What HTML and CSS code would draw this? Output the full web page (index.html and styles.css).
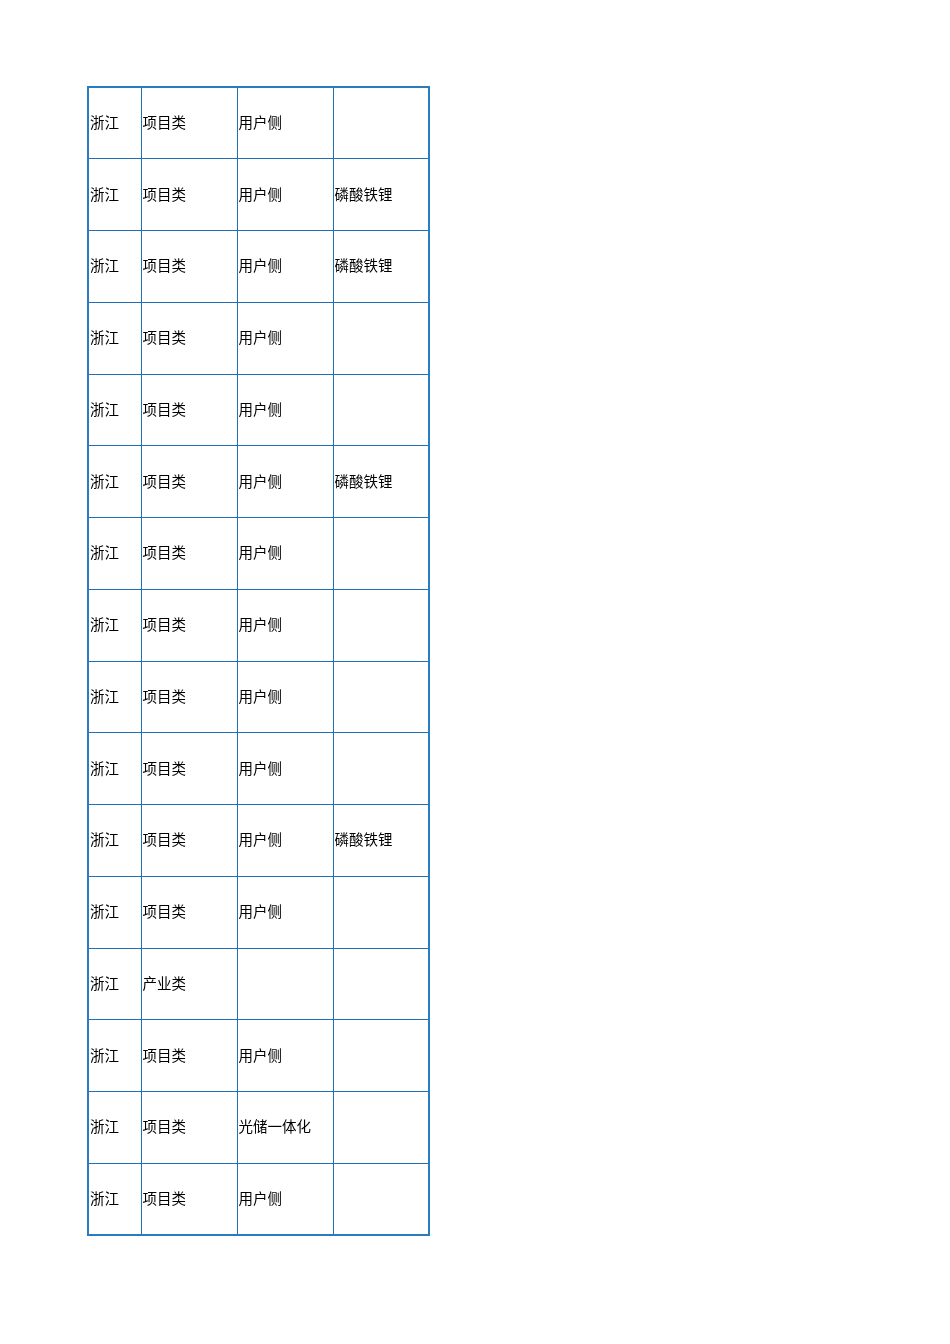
FILE: index.html
```html
<!DOCTYPE html>
<html lang="zh-CN">
<head>
<meta charset="utf-8">
<link rel="stylesheet" href="styles.css">
</head>
<body>
<table class="sheet">
<colgroup><col class="c1"><col class="c2"><col class="c3"><col class="c4"></colgroup>
<tbody>
<tr><td>浙江</td><td>项目类</td><td>用户侧</td><td></td></tr>
<tr><td>浙江</td><td>项目类</td><td>用户侧</td><td>磷酸铁锂</td></tr>
<tr><td>浙江</td><td>项目类</td><td>用户侧</td><td>磷酸铁锂</td></tr>
<tr><td>浙江</td><td>项目类</td><td>用户侧</td><td></td></tr>
<tr><td>浙江</td><td>项目类</td><td>用户侧</td><td></td></tr>
<tr><td>浙江</td><td>项目类</td><td>用户侧</td><td>磷酸铁锂</td></tr>
<tr><td>浙江</td><td>项目类</td><td>用户侧</td><td></td></tr>
<tr><td>浙江</td><td>项目类</td><td>用户侧</td><td></td></tr>
<tr><td>浙江</td><td>项目类</td><td>用户侧</td><td></td></tr>
<tr><td>浙江</td><td>项目类</td><td>用户侧</td><td></td></tr>
<tr><td>浙江</td><td>项目类</td><td>用户侧</td><td>磷酸铁锂</td></tr>
<tr><td>浙江</td><td>项目类</td><td>用户侧</td><td></td></tr>
<tr><td>浙江</td><td>产业类</td><td></td><td></td></tr>
<tr><td>浙江</td><td>项目类</td><td>用户侧</td><td></td></tr>
<tr><td>浙江</td><td>项目类</td><td>光储一体化</td><td></td></tr>
<tr><td>浙江</td><td>项目类</td><td>用户侧</td><td></td></tr>
</tbody>
</table>
</body>
</html>
```
FILE: styles.css
```css
html, body {
  margin: 0;
  padding: 0;
  background: #ffffff;
}
body {
  padding: 86px 0 0 87px;
  font-family: "Noto Sans CJK SC", sans-serif;
  font-size: 14.5px;
  color: #000000;
}
.sheet {
  border-collapse: collapse;
  table-layout: fixed;
  width: 341px;
  border: 2px solid #2b7bbf;
  will-change: transform;
}
.c1 { width: 53px; }
.c2 { width: 96px; }
.c3 { width: 96px; }
.c4 { width: 96px; }
.sheet tr {
  height: 71.75px;
}
.sheet td {
  border: 1px solid #1f70b6;
  padding: 0 0 2px 1px;
  vertical-align: middle;
  white-space: nowrap;
  overflow: hidden;
  line-height: 18px;
  color: #000000;
}
```
